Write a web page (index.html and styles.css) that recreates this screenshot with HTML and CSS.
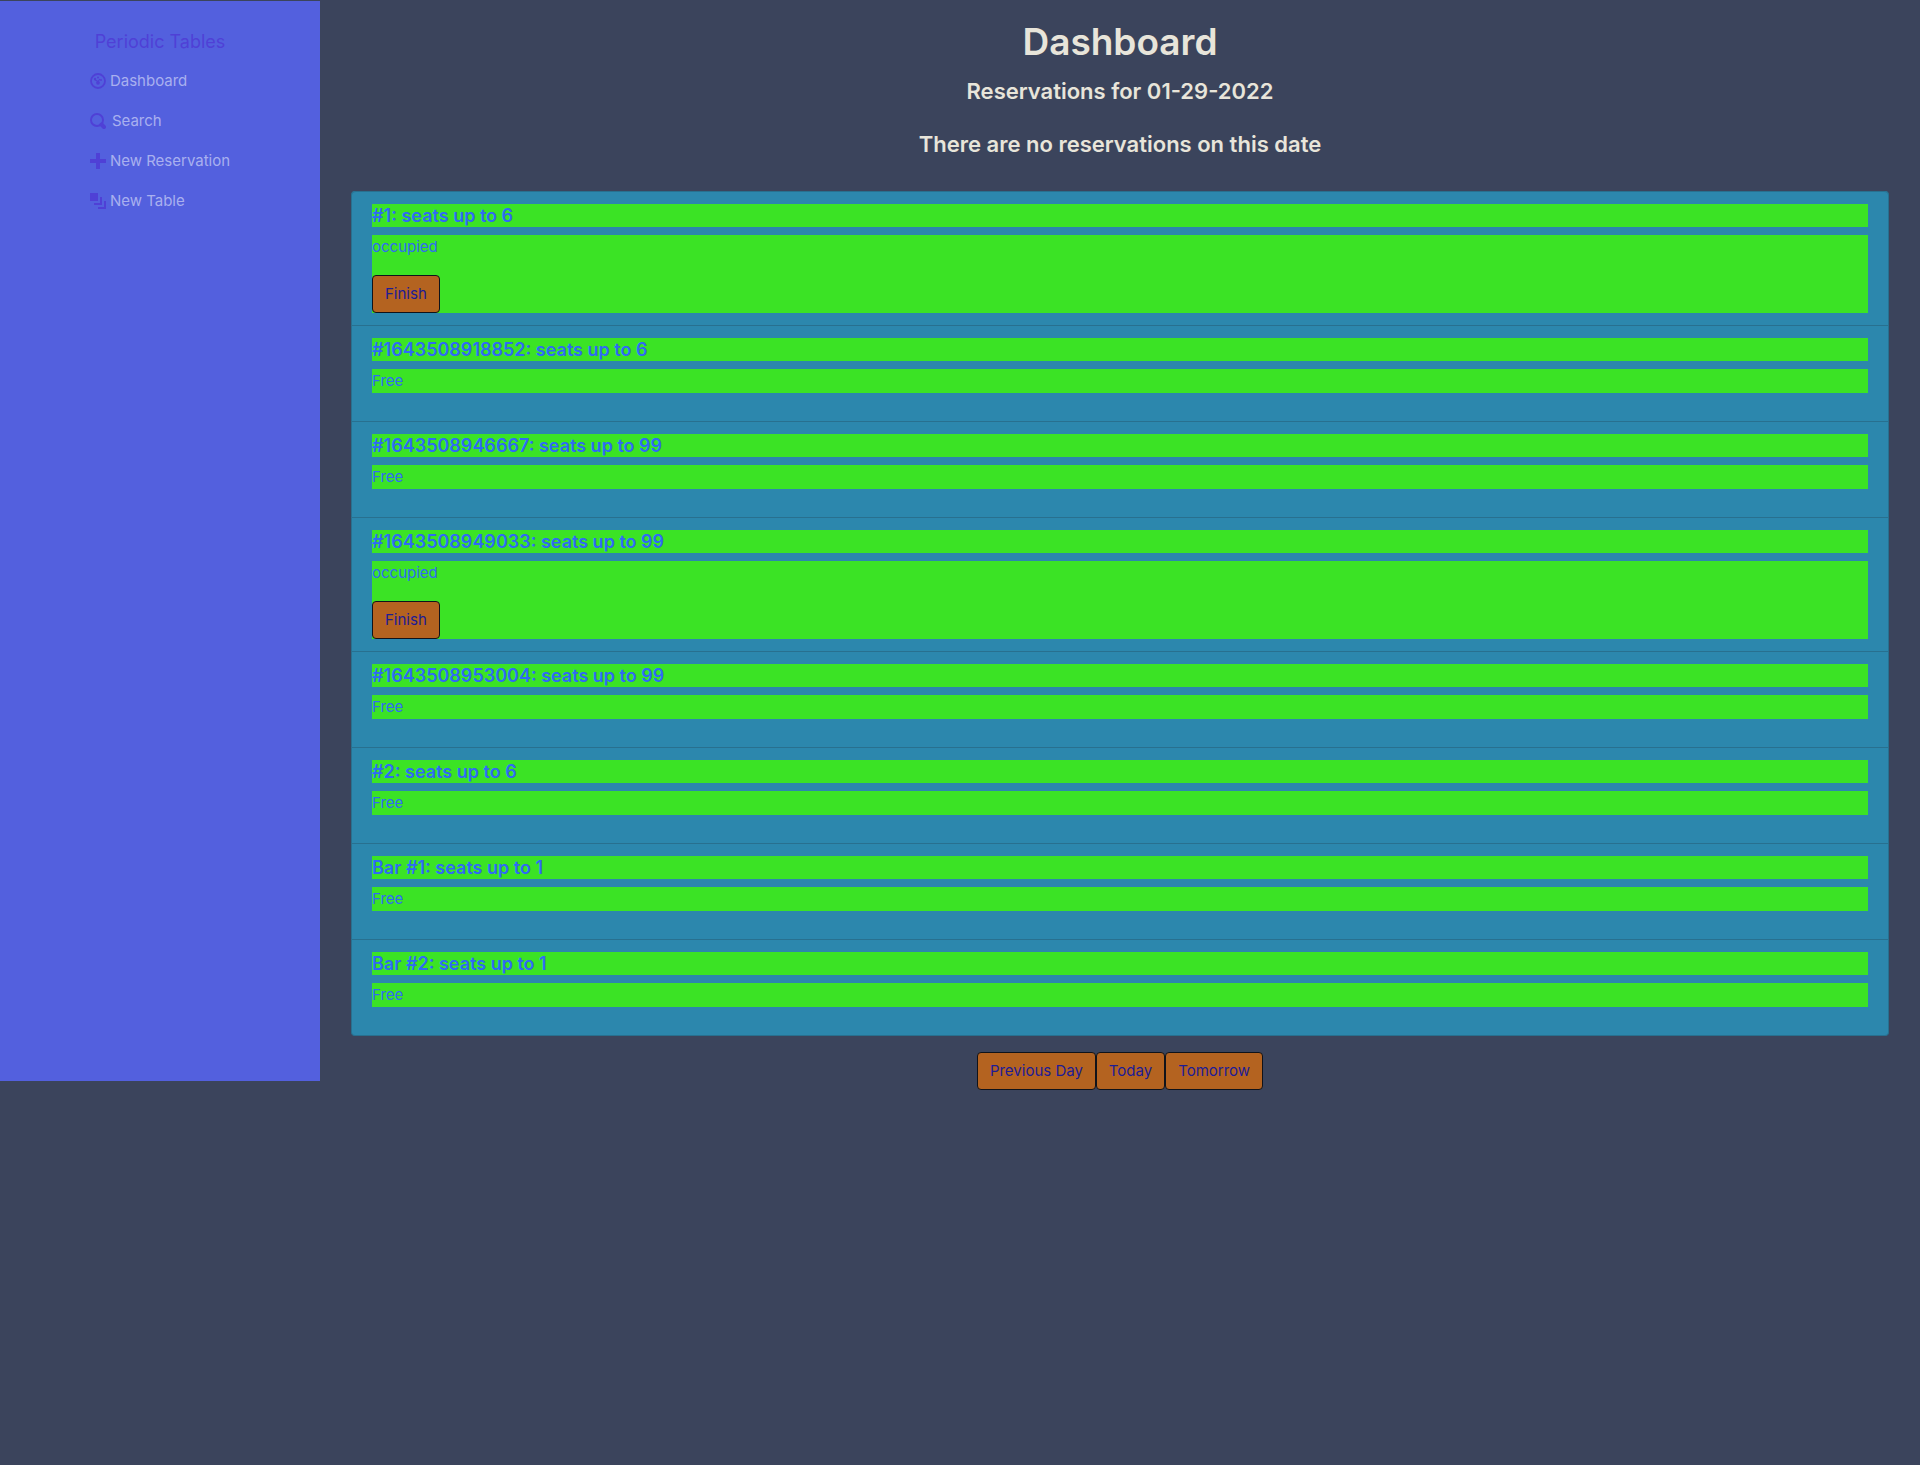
FILE: index.html
```html
<!DOCTYPE html>
<html lang="en">
<head>
  <meta charset="utf-8">
  <meta name="viewport" content="width=device-width, initial-scale=1">
  <title>Periodic Tables</title>
  <link rel="stylesheet" href="styles.css">
</head>
<body>
  <div class="layout">
    <nav class="sidebar">
      <a class="brand" href="#">Periodic Tables</a>
      <ul class="nav">
        <li><a class="nav-link" href="#"><svg class="icon" viewBox="0 0 16 16"><circle cx="8" cy="8" r="7" fill="none" stroke="currentColor" stroke-width="1.800"/><circle cx="8" cy="4.500" r="1"/><circle cx="11" cy="7" r="1"/><circle cx="5" cy="6" r="1.200"/><path d="M4.500 6.500 8 8.500 10 6" fill="none" stroke="currentColor" stroke-width="1.200"/><circle cx="8" cy="9.800" r="1.900"/></svg>Dashboard</a></li>
        <li><a class="nav-link nav-link-search" href="#"><svg class="icon" viewBox="0 0 16 16"><circle cx="7" cy="7" r="6" fill="none" stroke="currentColor" stroke-width="2"/><path d="M11.500 11.500 14 14" stroke="currentColor" stroke-width="4" stroke-linecap="round"/></svg>Search</a></li>
        <li><a class="nav-link" href="#"><svg class="icon" viewBox="0 0 16 16"><path d="M6 0h4v6h6v4h-6v6H6v-6H0V6h6z"/></svg>New Reservation</a></li>
        <li><a class="nav-link" href="#"><svg class="icon" viewBox="0 0 16 16"><path d="M0 0h8v8H0zM10 4h2v8H4v-2h6zM14 8h2v8H8v-2h6z"/></svg>New Table</a></li>
      </ul>
    </nav>
    <main class="main">
      <h1 class="title">Dashboard</h1>
      <h4 class="subtitle">Reservations for 01-29-2022</h4>
      <h4 class="subtitle">There are no reservations on this date</h4>
      <ul class="tables">
        <li class="table-item"><h5 class="table-name">#1: seats up to 6</h5><div class="table-state"><p class="status">occupied</p><button class="btn" type="button">Finish</button></div></li>
        <li class="table-item"><h5 class="table-name">#1643508918852: seats up to 6</h5><p class="status">Free</p></li>
        <li class="table-item"><h5 class="table-name">#1643508946667: seats up to 99</h5><p class="status">Free</p></li>
        <li class="table-item"><h5 class="table-name">#1643508949033: seats up to 99</h5><div class="table-state"><p class="status">occupied</p><button class="btn" type="button">Finish</button></div></li>
        <li class="table-item"><h5 class="table-name">#1643508953004: seats up to 99</h5><p class="status">Free</p></li>
        <li class="table-item"><h5 class="table-name">#2: seats up to 6</h5><p class="status">Free</p></li>
        <li class="table-item"><h5 class="table-name">Bar #1: seats up to 1</h5><p class="status">Free</p></li>
        <li class="table-item"><h5 class="table-name">Bar #2: seats up to 1</h5><p class="status">Free</p></li>
      </ul>
      <div class="days">
        <button class="btn" type="button">Previous Day</button><button class="btn" type="button">Today</button><button class="btn" type="button">Tomorrow</button>
      </div>
    </main>
  </div>
</body>
</html>
```
FILE: styles.css
```css
* {
  box-sizing: border-box;
}

body {
  margin: 0;
  padding-top: 1px;
  background: #3b445c;
  font: 15px/24px Inter, "Liberation Sans", sans-serif;
}

h1, h4, h5, p, ul {
  margin: 0;
  padding: 0;
}

h1, h4, h5 {
  font-weight: 600;
}

ul {
  list-style: none;
}

.layout {
  display: grid;
  grid-template-columns: 1fr 5fr;
  align-items: start;
}

.sidebar {
  display: flex;
  flex-direction: column;
  align-items: center;
  min-height: 1080px;
  padding-top: 24px;
  background: #5360de;
  color: #4f40d6;
}

.brand {
  color: #4f40d6;
  font-size: 18px;
  line-height: 34px;
  text-decoration: none;
}

.nav {
  padding-top: 2px;
}

.nav-link {
  display: flex;
  align-items: center;
  gap: 4px;
  height: 40px;
  color: #a9b0ef;
  text-decoration: none;
}

.nav-link-search {
  gap: 6px;
}

.icon {
  width: 16px;
  height: 16px;
  fill: currentColor;
  color: #4f40d6;
}

.main {
  padding: 17px 31px;
  color: #e8e5da;
}

.title {
  margin-bottom: 11px;
  font-size: 37px;
  line-height: 48px;
  text-align: center;
}

.subtitle {
  margin-bottom: 24px;
  font-size: 22px;
  line-height: 29px;
  text-align: center;
}

.tables {
  margin: 32px 0 16px;
  border: 1px solid #28708f;
  border-top: 0;
  border-radius: 4px;
  background: #2c87ad;
}

.table-item {
  padding: 12px 20px;
  border-top: 1px solid #28708f;
}

.table-item:first-child {
  border-radius: 4px 4px 0 0;
}

.table-name {
  margin-bottom: 8px;
  background: #3be325;
  color: #2f6af5;
  font-size: 18px;
  line-height: 23px;
}

.status {
  margin-bottom: 16px;
  background: #3be325;
  color: #2f6af5;
}

.table-state {
  background: #3be325;
}

.btn {
  height: 38px;
  padding: 0 12px;
  border: 1px solid #10131a;
  border-radius: 4px;
  background: #b46320;
  color: #1c1c96;
  font: inherit;
}

.table-state .btn {
  display: block;
}

.days {
  display: flex;
  justify-content: center;
}
```
